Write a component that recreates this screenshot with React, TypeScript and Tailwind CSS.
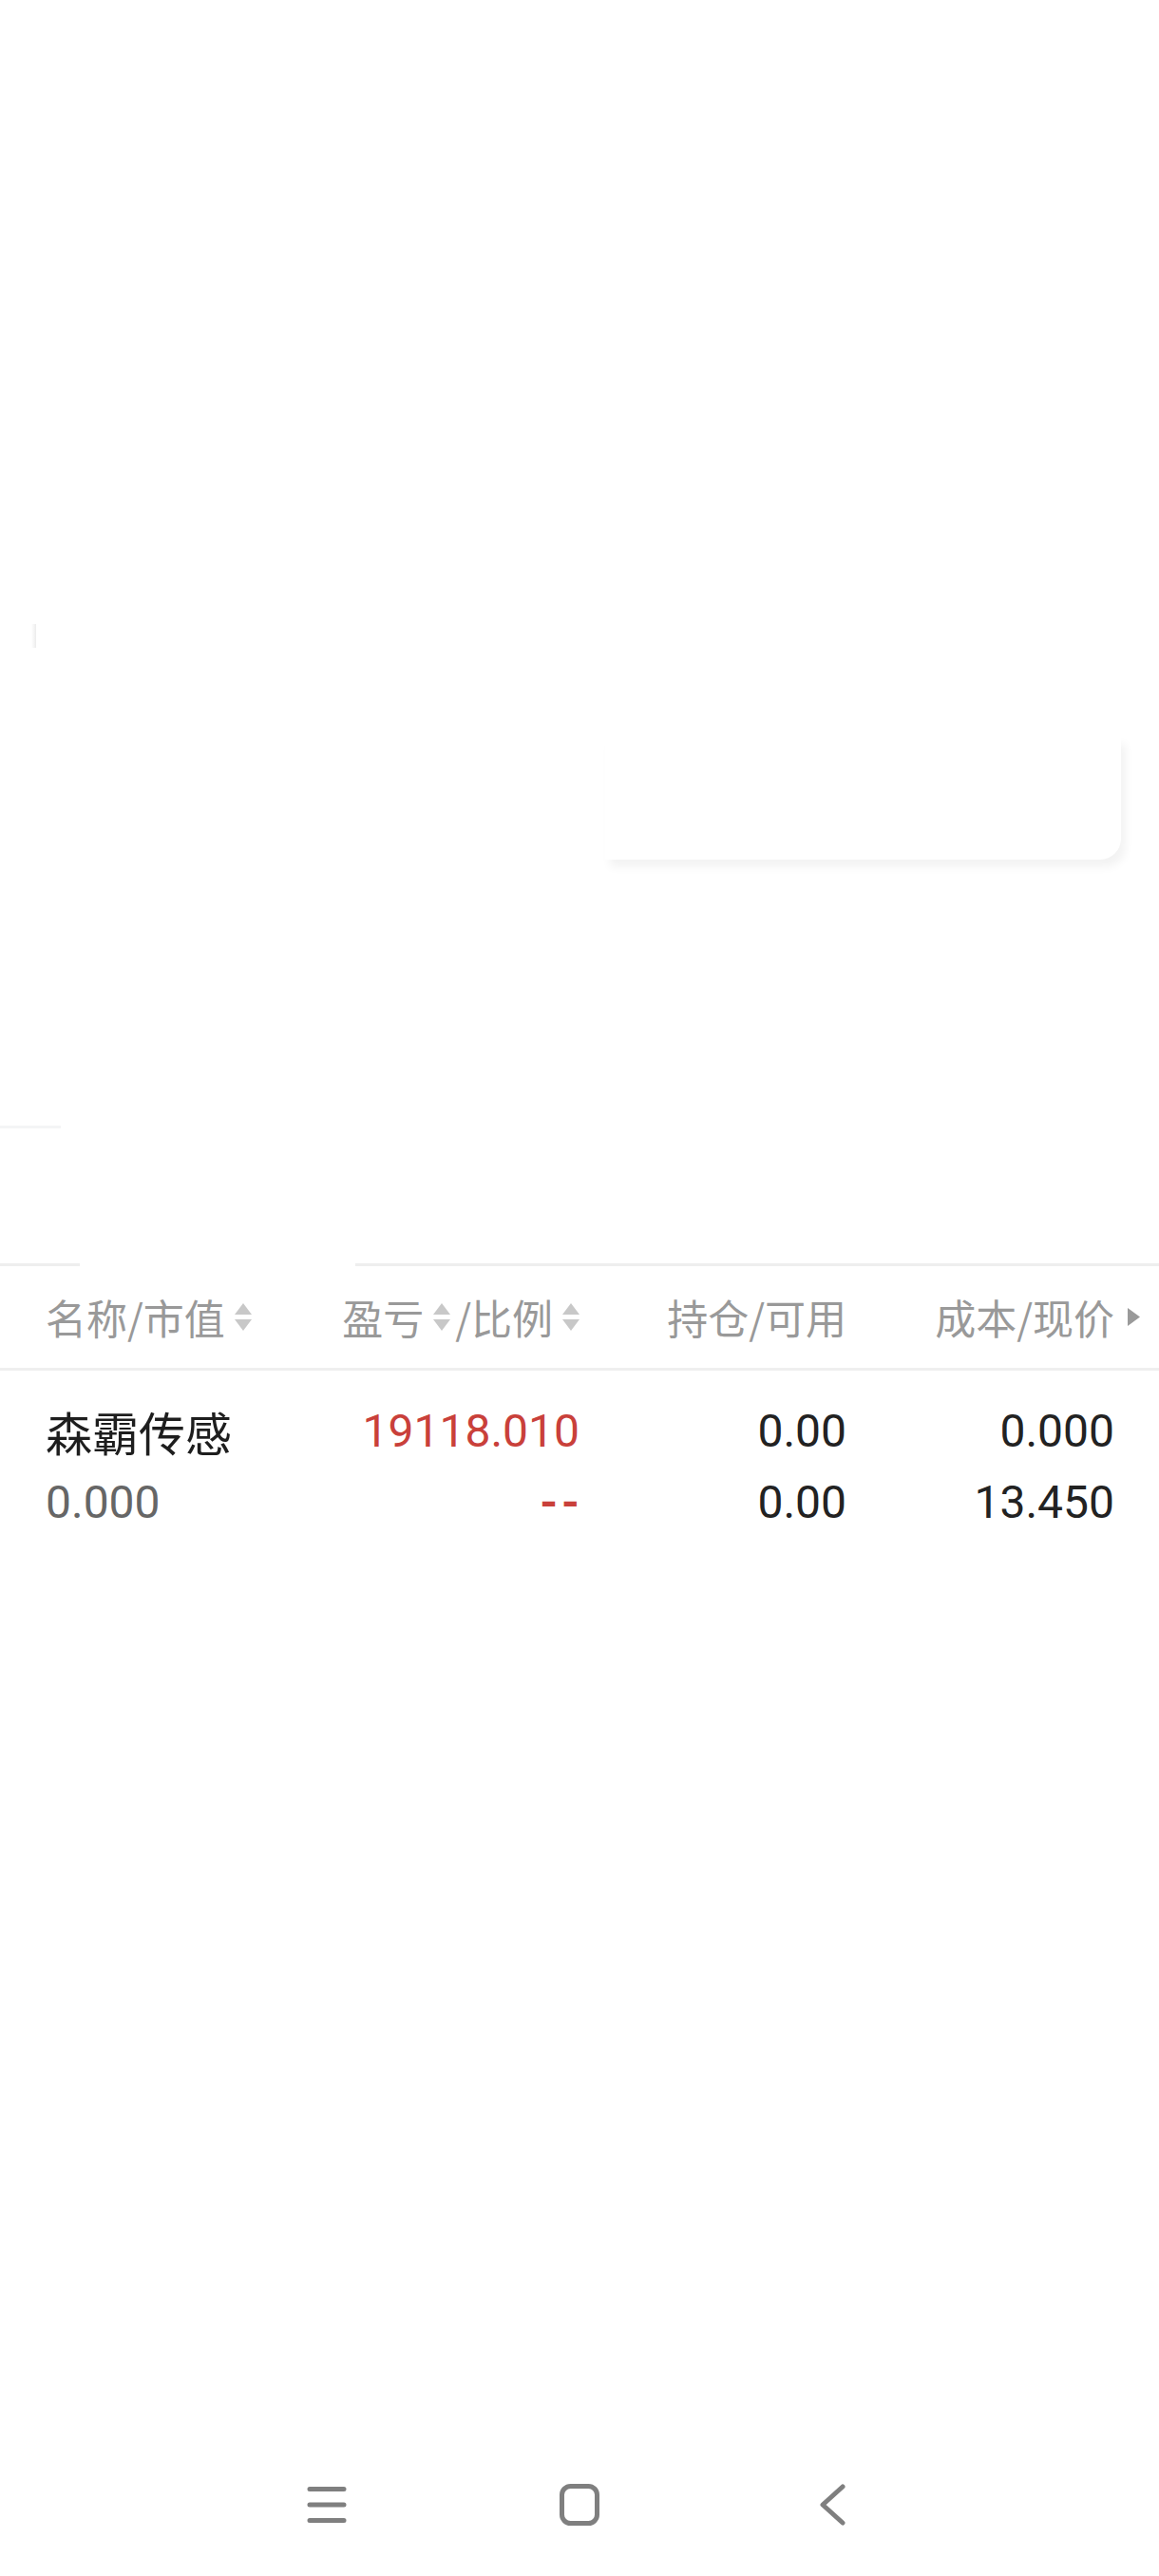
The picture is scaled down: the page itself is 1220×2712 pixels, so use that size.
import { ReactNode } from 'react';

const cjk = "font-['Noto_Sans_CJK_SC','Noto_Sans',sans-serif]";
const num = "font-['Roboto','Noto_Sans_CJK_SC',sans-serif]";

const SortIcon = () => (
  <span className="ml-[10px] flex flex-col items-center gap-[5px]">
    <svg width="18" height="12" viewBox="0 0 18 12">
      <path d="M9 0 L18 12 L0 12 Z" fill="#c8c8c8" />
    </svg>
    <svg width="18" height="12" viewBox="0 0 18 12">
      <path d="M0 0 L18 0 L9 12 Z" fill="#c8c8c8" />
    </svg>
  </span>
);

const Cell = ({ children, right }: { children: ReactNode; right?: boolean }) => (
  <div className={`flex items-center ${right ? 'justify-end' : 'justify-start'}`}>{children}</div>
);

const NavBar = () => (
  <div className="h-[150px] flex items-center justify-center gap-[224px]">
    <svg width="42" height="42" viewBox="0 0 42 42" fill="none" stroke="#7f7f7f" strokeWidth="5" strokeLinecap="round">
      <path d="M3 4.5 H39 M3 21 H39 M3 37.5 H39" />
    </svg>
    <svg width="42" height="44" viewBox="0 0 42 44" fill="none" stroke="#7f7f7f" strokeWidth="5">
      <rect x="2.5" y="2.5" width="37" height="39" rx="9" />
    </svg>
    <svg width="42" height="44" viewBox="0 0 42 44" fill="none" stroke="#7f7f7f" strokeWidth="5" strokeLinecap="round" strokeLinejoin="round">
      <path d="M32 3 L11 22 L32 41" />
    </svg>
  </div>
);

export default function App() {
  return (
    <div className={`w-[1220px] h-[2712px] bg-white flex flex-col ${cjk}`}>
      {/* ghost marks left over from the transition */}
      <div className="h-[657px]" />
      <div className="h-[25px] pl-[33px] flex">
        <div className="w-[5px] h-full bg-gradient-to-r from-white to-[#ececec]" />
      </div>
      <div className="h-[93px]" />
      <div className="flex justify-end pr-[40px]">
        <div className="w-[543px] h-[130px] bg-white rounded-br-[22px] shadow-[5px_8px_10px_rgba(0,0,0,0.05)]" />
      </div>
      <div className="h-[280px]" />
      <div className="w-[64px] h-[3px] bg-[#f4f5f6]" />
      <div className="h-[142px]" />

      {/* table header */}
      <div className="flex h-[3px]">
        <div className="w-[84px] bg-[#eeeeee]" />
        <div className="w-[290px]" />
        <div className="flex-1 bg-[#eeeeee]" />
      </div>
      <div className="h-[110px] border-b-[3px] border-[#efefef] pl-[48px] pr-[47px] grid grid-cols-[310px_252px_281px_282px] items-center text-[43px] text-[#999999]">
        <Cell>
          <span>名称/市值</span>
          <SortIcon />
        </Cell>
        <Cell right>
          <span>盈亏</span>
          <SortIcon />
          <span className="ml-[5px]">/比例</span>
          <SortIcon />
        </Cell>
        <Cell right>
          <span>持仓/可用</span>
        </Cell>
        <Cell right>
          <span>成本/现价</span>
          <span className="w-0 overflow-visible flex">
            <svg className="ml-[14px] shrink-0" width="13" height="19" viewBox="0 0 13 19">
              <path d="M0 0 L13 9.5 L0 19 Z" fill="#9a9a9a" />
            </svg>
          </span>
        </Cell>
      </div>

      {/* holding row */}
      <div className="pt-[26px] pl-[48px] pr-[47px] grid grid-cols-[310px_252px_281px_282px] text-[48px] leading-[75px]">
        <div className="flex flex-col">
          <span className="text-[#1e1e1e] text-[49px]">森霸传感</span>
          <span className={`${num} text-[#666666]`}>0.000</span>
        </div>
        <div className={`flex flex-col items-end ${num} text-[#c9403a]`}>
          <span>19118.010</span>
          <span className="font-bold tracking-[4px] mr-[-4px]">--</span>
        </div>
        <div className={`flex flex-col items-end ${num} text-[#222222]`}>
          <span>0.00</span>
          <span>0.00</span>
        </div>
        <div className={`flex flex-col items-end ${num} text-[#222222]`}>
          <span>0.000</span>
          <span>13.450</span>
        </div>
      </div>

      <div className="flex-1" />
      <NavBar />
    </div>
  );
}
